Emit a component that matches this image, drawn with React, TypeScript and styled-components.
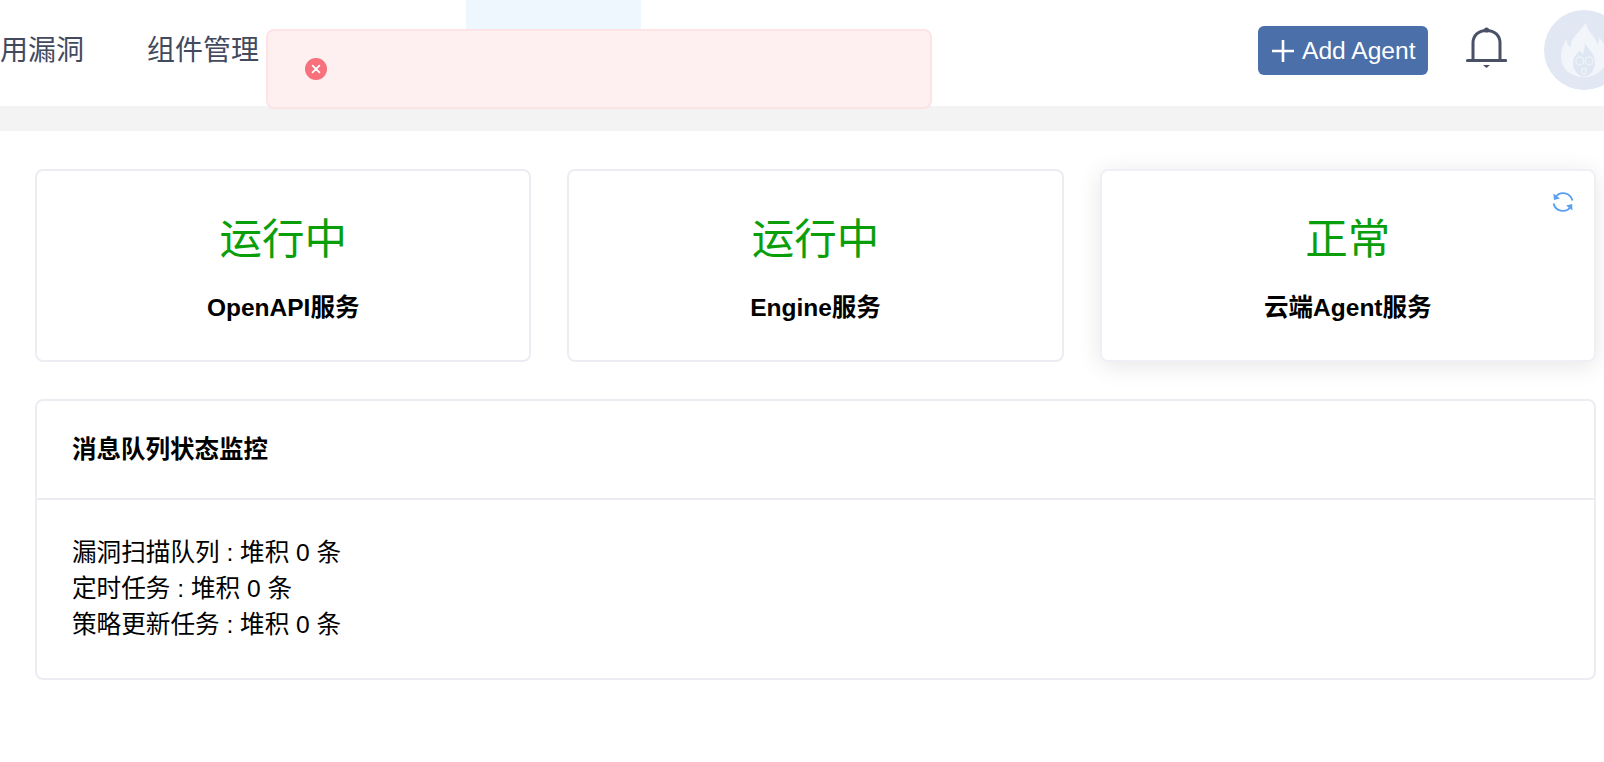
import React from "react";
import styled, { createGlobalStyle } from "styled-components";

const Global = createGlobalStyle`
  html, body { margin: 0; padding: 0; background: #fff; overflow: hidden; }
  body { font-family: "Liberation Sans", "Noto Sans CJK SC", sans-serif; color: #000; }
`;

const Page = styled.div`
  width: 1604px;
  height: 762px;
  overflow: hidden;
  position: relative;
`;

const Header = styled.header`
  height: 106px;
  background: #fff;
  display: flex;
  align-items: stretch;
`;

const Nav = styled.nav`
  display: flex;
  align-items: stretch;
  flex: 1;
`;

const NavItem = styled.div<{ $width: number; $pad: number }>`
  width: ${(p) => p.$width}px;
  margin-left: ${(p) => p.$pad}px;
  display: flex;
  align-items: center;
  font-size: 28px;
  color: #434a5e;
  white-space: nowrap;
  padding-bottom: 10px;
  box-sizing: border-box;
`;

const ActiveNavItem = styled.div`
  width: 175px;
  margin-left: 206px;
  background: #eef6fe;
`;

const Actions = styled.div`
  display: flex;
  align-items: flex-start;
  width: 346px;
  flex-shrink: 0;
`;

const AddButton = styled.button`
  width: 170px;
  height: 49px;
  margin-top: 26px;
  flex-shrink: 0;
  border: 0;
  border-radius: 6px;
  background: #4a6fa9;
  color: #fff;
  font: 24.6px "Liberation Sans", sans-serif;
  display: flex;
  align-items: center;
  gap: 8px;
  padding: 0 0 0 14px;
  box-sizing: border-box;
`;

const BellWrap = styled.div`
  margin: 26px 0 0 37px;
  width: 42px;
  height: 44px;
  flex-shrink: 0;
  color: #4a5167;
`;

const Avatar = styled.div`
  width: 80px;
  height: 80px;
  margin: 10px 0 0 37px;
  border-radius: 50%;
  background: #e1e8f3;
  flex-shrink: 0;
  display: flex;
  align-items: center;
  justify-content: center;
`;

const Band = styled.div`
  height: 25px;
  background: #f3f3f3;
`;

const Content = styled.main`
  padding: 38px 8px 0 35px;
  display: flex;
  flex-direction: column;
  gap: 37px;
`;

const CardRow = styled.div`
  display: grid;
  grid-template-columns: repeat(3, 1fr);
  gap: 36px;
`;

const Card = styled.section<{ $raised?: boolean }>`
  position: relative;
  height: 193px;
  box-sizing: border-box;
  border: 2px solid #ebedf2;
  border-radius: 8px;
  background: #fff;
  display: flex;
  flex-direction: column;
  align-items: center;
  padding-top: 39px;
  ${(p) => p.$raised && "box-shadow: 0 4px 24px rgba(0, 0, 0, 0.1); border-color: #eef0f6;"}
`;

const Status = styled.div`
  font-size: 42.5px;
  line-height: 60px;
  color: #0a9f0a;
`;

const CardLabel = styled.div`
  font-size: 24.5px;
  line-height: 36px;
  font-weight: 700;
  margin-top: 20px;
`;

const Refresh = styled.span`
  position: absolute;
  top: 19px;
  right: 19px;
  width: 24px;
  height: 24px;
  color: #5a9ff0;
`;

const Panel = styled.section`
  height: 281px;
  box-sizing: border-box;
  border: 2px solid #ebedf2;
  border-radius: 8px;
  background: #fff;
`;

const PanelHead = styled.div`
  height: 99px;
  box-sizing: border-box;
  border-bottom: 2px solid #ebedf2;
  padding: 31px 35px 0;
  font-size: 24.5px;
  line-height: 36px;
  font-weight: 700;
`;

const PanelBody = styled.div`
  padding: 35px 35px 0;
  font-size: 24.6px;
  line-height: 36px;
`;

const QueueRow = styled.div``;

const Toast = styled.div`
  position: absolute;
  left: 266px;
  top: 29px;
  width: 666px;
  height: 80px;
  box-sizing: border-box;
  background: #fef0f0;
  border: 2px solid #fbe3e6;
  border-radius: 8px;
  display: flex;
  align-items: center;
  padding-left: 37px;
`;

const ToastIcon = styled.span`
  width: 22px;
  height: 22px;
  display: block;
`;

const queues = ["漏洞扫描队列", "定时任务", "策略更新任务"];

const cards = [
  { status: "运行中", label: "OpenAPI服务" },
  { status: "运行中", label: "Engine服务" },
  { status: "正常", label: "云端Agent服务", raised: true },
];

export default function App() {
  return (
    <Page>
      <Global />
      <Header>
        <Nav>
          <NavItem $width={84} $pad={0}>用漏洞</NavItem>
          <NavItem $width={113} $pad={63}>组件管理</NavItem>
          <ActiveNavItem />
        </Nav>
        <Actions>
          <AddButton>
            <svg width="22" height="24" viewBox="0 0 22 24" aria-hidden="true">
              <path d="M11 1v22M0 12h22" stroke="#fff" strokeWidth="2.6" fill="none" />
            </svg>
            Add Agent
          </AddButton>
          <BellWrap>
            <svg width="42" height="44" viewBox="0 0 42 44" fill="none" aria-hidden="true">
              <path d="M8 34V17C8 9.5 13.5 4.5 21.5 4.5S35 9.5 35 17v17" stroke="currentColor" strokeWidth="3" />
              <path d="M2.5 34.5h38" stroke="currentColor" strokeWidth="3.2" strokeLinecap="round" />
              <circle cx="21.5" cy="4" r="2.6" fill="currentColor" />
              <path d="M18 39h7l-3.5 3z" fill="currentColor" />
            </svg>
          </BellWrap>
          <Avatar>
            <svg width="54" height="60" viewBox="0 0 64 68" aria-hidden="true">
              <path
                d="M34 2c3 12 12 16 14 26 1-3 2-6 2-9 6 7 10 15 9 24-1 13-12 23-27 23S6 57 5 44c-1-9 3-16 6-23 1 5 2 8 5 10 0-12 11-18 18-29z"
                fill="#f2f5fa"
              />
              <path
                d="M33 26c5 8 12 13 12 23 0 9-6 16-13 16s-13-7-13-16c0-6 4-10 8-14 2 2 3 3 3 5 2-4 3-9 3-14z"
                fill="#dfe7f2"
              />
              <circle cx="27" cy="47" r="4.6" fill="none" stroke="#f2f5fa" strokeWidth="1.2" />
              <circle cx="38" cy="47" r="4.6" fill="none" stroke="#f2f5fa" strokeWidth="1.2" />
              <ellipse cx="32" cy="59" rx="2.6" ry="3.4" fill="none" stroke="#f2f5fa" strokeWidth="1.2" />
            </svg>
          </Avatar>
        </Actions>
      </Header>
      <Band />
      <Content>
        <CardRow>
          {cards.map((c) => (
            <Card key={c.label} $raised={c.raised}>
              {c.raised && (
                <Refresh>
                  <svg width="24" height="24" viewBox="0 0 24 24" fill="none" aria-hidden="true">
                    <path d="M4.5 7A9.5 9.5 0 0 1 21.4 10.5" stroke="currentColor" strokeWidth="1.9" />
                    <path d="M19.5 17A9.5 9.5 0 0 1 2.6 13.5" stroke="currentColor" strokeWidth="1.9" />
                    <path d="M2.5 3.5l.4 6.4 6-1.4z" fill="currentColor" />
                    <path d="M21.5 20.5l-.4-6.4-6 1.4z" fill="currentColor" />
                  </svg>
                </Refresh>
              )}
              <Status>{c.status}</Status>
              <CardLabel>{c.label}</CardLabel>
            </Card>
          ))}
        </CardRow>
        <Panel>
          <PanelHead>消息队列状态监控</PanelHead>
          <PanelBody>
            {queues.map((q) => (
              <QueueRow key={q}>{q} : 堆积 0 条</QueueRow>
            ))}
          </PanelBody>
        </Panel>
      </Content>
      <Toast>
        <ToastIcon>
          <svg width="22" height="22" viewBox="0 0 22 22" aria-hidden="true">
            <circle cx="11" cy="11" r="11" fill="#f6717c" />
            <path d="M7.6 7.6l6.8 6.8M14.4 7.6l-6.8 6.8" stroke="#fff" strokeWidth="1.8" strokeLinecap="round" />
          </svg>
        </ToastIcon>
      </Toast>
    </Page>
  );
}
